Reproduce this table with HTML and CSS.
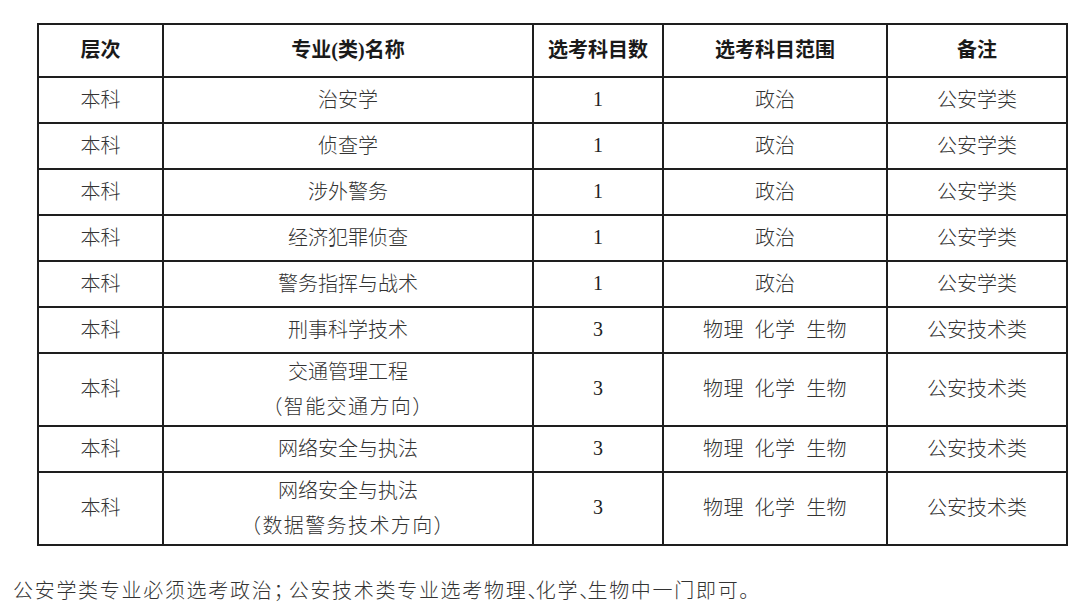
FILE: index.html
```html
<!DOCTYPE html>
<html lang="zh-CN">
<head>
<meta charset="utf-8">
<title>选考科目要求</title>
<link rel="stylesheet" href="styles.css">
</head>
<body>
<div class="page">
  <table class="req">
    <colgroup>
      <col class="c-level">
      <col class="c-name">
      <col class="c-count">
      <col class="c-range">
      <col class="c-note">
    </colgroup>
    <thead>
      <tr class="head">
        <th>层次</th>
        <th>专业(类)名称</th>
        <th>选考科目数</th>
        <th>选考科目范围</th>
        <th>备注</th>
      </tr>
    </thead>
    <tbody>
      <tr><td>本科</td><td>治安学</td><td class="num">1</td><td>政治</td><td>公安学类</td></tr>
      <tr><td>本科</td><td>侦查学</td><td class="num">1</td><td>政治</td><td>公安学类</td></tr>
      <tr><td>本科</td><td>涉外警务</td><td class="num">1</td><td>政治</td><td>公安学类</td></tr>
      <tr><td>本科</td><td>经济犯罪侦查</td><td class="num">1</td><td>政治</td><td>公安学类</td></tr>
      <tr><td>本科</td><td>警务指挥与战术</td><td class="num">1</td><td>政治</td><td>公安学类</td></tr>
      <tr><td>本科</td><td>刑事科学技术</td><td class="num">3</td><td class="subj">物理  化学  生物</td><td>公安技术类</td></tr>
      <tr class="tall"><td>本科</td><td>交通管理工程<br><span class="paren">（智能交通方向）</span></td><td class="num">3</td><td class="subj">物理  化学  生物</td><td>公安技术类</td></tr>
      <tr><td>本科</td><td>网络安全与执法</td><td class="num">3</td><td class="subj">物理  化学  生物</td><td>公安技术类</td></tr>
      <tr class="tall"><td>本科</td><td>网络安全与执法<br><span class="paren">（数据警务技术方向）</span></td><td class="num">3</td><td class="subj">物理  化学  生物</td><td>公安技术类</td></tr>
    </tbody>
  </table>
  <p class="note">公安学类专业必须选考政治<span class="semi">；</span>公安技术类专业选考物理<span class="comma">、</span>化学<span class="comma">、</span>生物中一门即可。</p>
</div>
</body>
</html>
```

FILE: styles.css
```css
html, body {
  margin: 0;
  padding: 0;
  background: #ffffff;
}

body {
  font-family: "Liberation Serif", "Noto Sans CJK SC", serif;
  color: #2b2b2b;
}

.page {
  padding: 23px 0 0 0;
}

.req {
  margin-left: 37px;
  width: 1031px;
  border-collapse: collapse;
  table-layout: fixed;
  border: 2px solid #1e1e1e;
}

.c-level { width: 125px; }
.c-name { width: 370px; }
.c-count { width: 130px; }
.c-range { width: 224px; }
.c-note { width: 180px; }

.req th,
.req td {
  border: 2px solid #1e1e1e;
  padding: 0;
  text-align: center;
  vertical-align: middle;
  font-size: 20px;
  line-height: 35px;
}

.req th {
  font-weight: 700;
  color: #1a1a1a;
}

.req td {
  font-weight: 300;
  color: #333333;
}

.head {
  height: 53px;
}

.req tbody tr {
  height: 46px;
}

.req tbody tr.tall {
  height: 73px;
}

.req td.num {
  font-size: 20px;
  font-weight: 400;
  color: #222222;
  padding-bottom: 2px;
}

.req td.subj {
  white-space: pre;
  letter-spacing: 0.4px;
}

.paren {
  letter-spacing: 1.4px;
}

.note {
  margin: 33px 0 0 13px;
  font-size: 20px;
  line-height: 24px;
  letter-spacing: 1.7px;
  font-weight: 300;
  color: #333333;
}

.semi {
  letter-spacing: -4.7px;
}

.comma {
  letter-spacing: -11.7px;
}
```
